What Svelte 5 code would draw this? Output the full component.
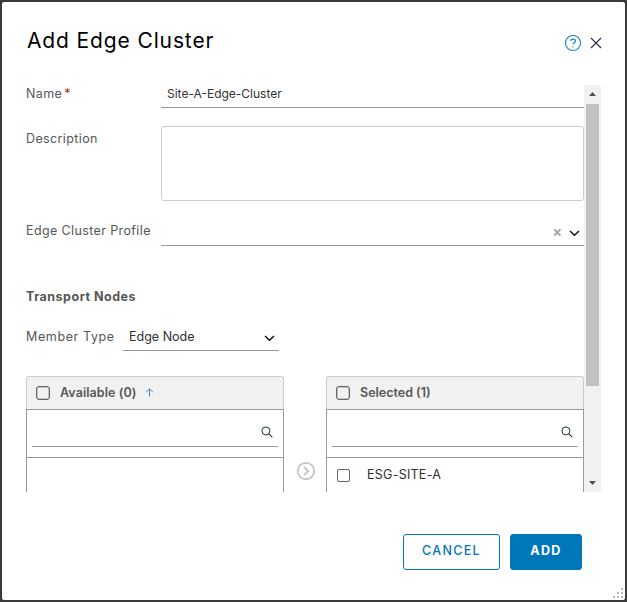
<script>
  let name = $state('Site-A-Edge-Cluster');
  const lists = [
    { title: 'Available (0)', cls: 'available', sorted: true, rows: [] },
    { title: 'Selected (1)', cls: 'selected', sorted: false, rows: ['ESG-SITE-A'] }
  ];
</script>

{#snippet chevron()}
  <svg class="chevron" width="11" height="7" viewBox="0 0 11 7"><path d="M1 1l4.5 4.2L10 1" fill="none" stroke="#111" stroke-width="1.5" /></svg>
{/snippet}

{#snippet list(l)}
  <section class="list">
    <header>
      <span class="box"></span>
      <b class={l.cls}>{l.title}</b>
      {#if l.sorted}
        <svg class="sort" width="9" height="9" viewBox="0 0 9 9"><path d="M4.5 8.5V1M1 4.3l3.5-3.5L8 4.3" fill="none" stroke="#3b87d0" stroke-width="1" /></svg>
      {/if}
    </header>
    <div class="filter">
      <div class="search">
        <svg width="12" height="12" viewBox="0 0 12 12"><circle cx="4.9" cy="4.9" r="4" fill="none" stroke="#20303c" /><path d="M7.8 7.8l3.5 3.3" stroke="#20303c" stroke-width="1.1" /></svg>
      </div>
    </div>
    <div class="rows">
      {#each l.rows as row}
        <div class="row"><span class="box small"></span><span class="rowname">{row}</span></div>
      {/each}
    </div>
  </section>
{/snippet}

<main>
  <div class="dialog">
    <div class="top">
      <h1>Add Edge Cluster</h1>
      <div class="tools">
        <svg width="18" height="18" viewBox="0 0 18 18"><circle cx="9" cy="9" r="7.5" fill="none" stroke="#1b82bb" stroke-width="1.1" /><path d="M6.5 6.8c.3-2.2 5-2.4 5 .2 0 1.8-2.5 1.6-2.5 3.6M9 12.4v1.1" fill="none" stroke="#1b82bb" stroke-width="1.2" /></svg>
        <svg class="close" width="12" height="12" viewBox="0 0 12 12"><path d="M1 1l10 10M11 1L1 11" stroke="#29285a" stroke-width="1.1" /></svg>
      </div>
    </div>

    <div class="viewport">
      <div class="form">
        <div class="field name">
          <span class="label">Name<i>*</i></span>
          <div class="input"><span>{name}</span></div>
        </div>
        <div class="field desc">
          <span class="label">Description</span>
          <div class="textarea"></div>
        </div>
        <div class="field profile">
          <span class="label">Edge Cluster Profile</span>
          <div class="input">
            <svg class="clear" width="9" height="9" viewBox="0 0 9 9"><path d="M1.2 1.2l6.3 6.3M7.5 1.2L1.2 7.5" stroke="#a9a9a9" stroke-width="2" /></svg>
            {@render chevron()}
          </div>
        </div>
        <h2>Transport Nodes</h2>
        <div class="member">
          <span class="label">Member Type</span>
          <div class="select"><span>Edge Node</span>{@render chevron()}</div>
        </div>
        <div class="lists">
          {@render list(lists[0])}
          <div class="move">
            <svg width="20" height="20" viewBox="0 0 20 20"><circle cx="10" cy="10" r="8.2" fill="none" stroke="#c4c4c4" stroke-width="1.8" /><path d="M8 5.8l4.1 4.2L8 14.2" fill="none" stroke="#c4c4c4" stroke-width="1.9" /></svg>
          </div>
          {@render list(lists[1])}
        </div>
      </div>
      <div class="scrollbar">
        <svg width="17" height="19" viewBox="0 0 17 19"><path d="M5 11l3.5-4L12 11z" fill="#505050" /></svg>
        <div class="thumb"></div>
        <svg class="down" width="17" height="17" viewBox="0 0 17 17"><path d="M5 6h7l-3.5 4z" fill="#505050" /></svg>
      </div>
    </div>

    <footer>
      <button class="cancel">CANCEL</button>
      <button class="add">ADD</button>
    </footer>
    <svg class="grip" width="10" height="10" viewBox="0 0 10 10" fill="#b9b9b9"><path d="M8 0h2v2H8zM4 4h2v2H4zM8 4h2v2H8zM0 8h2v2H0zM4 8h2v2H4zM8 8h2v2H8z" /></svg>
  </div>
</main>

<style>
  main {
    width: 627px;
    height: 602px;
    box-sizing: border-box;
    padding: 2px;
    background: #3b3a3a;
    font: 12.5px/18px Inter, 'Open Sans', sans-serif;
    color: #565656;
    overflow: hidden;
  }
  .dialog {
    position: relative;
    width: 623px;
    height: 598px;
    background: #fff;
    border-radius: 2px;
    display: flex;
    flex-direction: column;
  }
  .top {
    height: 83px;
    box-sizing: border-box;
    padding: 24px 23px 0 25px;
    display: flex;
    justify-content: space-between;
  }
  h1 {
    margin: 0;
    font-size: 21px;
    line-height: 30px;
    font-weight: 400;
    letter-spacing: 0.87px;
    color: #000;
  }
  .tools { display: flex; align-items: center; gap: 8px; height: 34px; }
  .close { margin-top: -1px; }
  .viewport { display: flex; height: 407px; padding: 0 24px; overflow: hidden; }
  .form { width: 558px; height: 407px; overflow: hidden; }
  .field { display: flex; }
  .label { flex: none; width: 135px; white-space: nowrap; letter-spacing: 0.38px; }
  i { font-style: normal; color: #c92100; margin-left: 2px; }
  .input { flex: 1; box-sizing: border-box; border-bottom: 1px solid #999; display: flex; align-items: center; }
  .name { height: 23px; }
  .name .input { padding: 0 6px 5px; color: #313131; font-size: 12px; }
  .desc { margin-top: 18px; height: 75px; }
  .desc .label { padding-top: 4px; }
  .textarea { flex: 1; box-sizing: border-box; border: 1px solid #ccc; border-radius: 3px; }
  .profile { height: 24px; margin-top: 21px; }
  .profile .input { justify-content: flex-end; gap: 7px; padding: 0 4px 3px 0; }
  .chevron { position: relative; top: 1px; }
  h2 { margin: 42px 0 0; font-size: 12.5px; line-height: 18px; font-weight: 700; letter-spacing: 0.5px; }
  .member { display: flex; margin-top: 22px; height: 23px; }
  .member .label { width: 97px; letter-spacing: 0.62px; }
  .select {
    width: 156px;
    box-sizing: border-box;
    border-bottom: 1px solid #999;
    padding: 0 4px 4px 6px;
    display: flex;
    align-items: center;
    justify-content: space-between;
    color: #313131;
  }
  .lists { display: flex; height: 150px; margin-top: 25px; }
  .list { width: 258px; box-sizing: border-box; flex: none; display: flex; flex-direction: column; }
  .list header {
    height: 33px;
    box-sizing: border-box;
    border: 1px solid #ccc;
    border-bottom: 0;
    border-radius: 3px 3px 0 0;
    background: #f1f1f1;
    display: flex;
    align-items: center;
    padding: 0 0 1px 9px;
  }
  .box { width: 14px; height: 14px; box-sizing: border-box; border: 1px solid #666; box-shadow: inset 0 0 0 0.5px #999; border-radius: 3px; flex: none; }
  .list b { margin-left: 10px; font-size: 12.5px; font-weight: 600; }
  .available { letter-spacing: 0.08px; }
  .sort { margin-left: 8px; }
  .filter { height: 49px; box-sizing: border-box; border: 1px solid #999; padding: 0 5px; }
  .search { height: 37px; box-sizing: border-box; border-bottom: 1px solid #999; display: flex; justify-content: flex-end; padding: 16px 5px 0 0; }
  .rows { flex: 1; border: solid #999; border-width: 0 1px; }
  .row { display: flex; align-items: center; height: 35px; padding-left: 10px; color: #313131; }
  .small { width: 13px; height: 13px; border-radius: 2px; box-shadow: none; }
  .rowname { margin: -2px 0 0 17px; letter-spacing: 0.26px; }
  .move { width: 42px; display: flex; justify-content: center; padding: 85px 0 0 2px; box-sizing: border-box; }
  .scrollbar { width: 17px; background: #f1f1f1; display: flex; flex-direction: column; align-items: center; }
  .scrollbar svg { display: block; }
  .thumb { width: 13px; height: 282px; background: #c1c1c1; }
  .down { margin-top: auto; }
  footer { display: flex; justify-content: flex-end; gap: 10px; padding: 42px 43px 0 0; }
  button {
    height: 36px;
    box-sizing: border-box;
    border: 1px solid #0077b8;
    border-radius: 3px;
    padding: 0 0 3px;
    font: 500 12.5px/18px Inter, sans-serif;
    letter-spacing: 1.3px;
  }
  .cancel { width: 97px; color: #0077b8; background: #fff; }
  .add { width: 72px; color: #fff; background: #0077b8; font-weight: 700; }
  .grip { position: absolute; right: 2px; bottom: 2px; }
</style>
